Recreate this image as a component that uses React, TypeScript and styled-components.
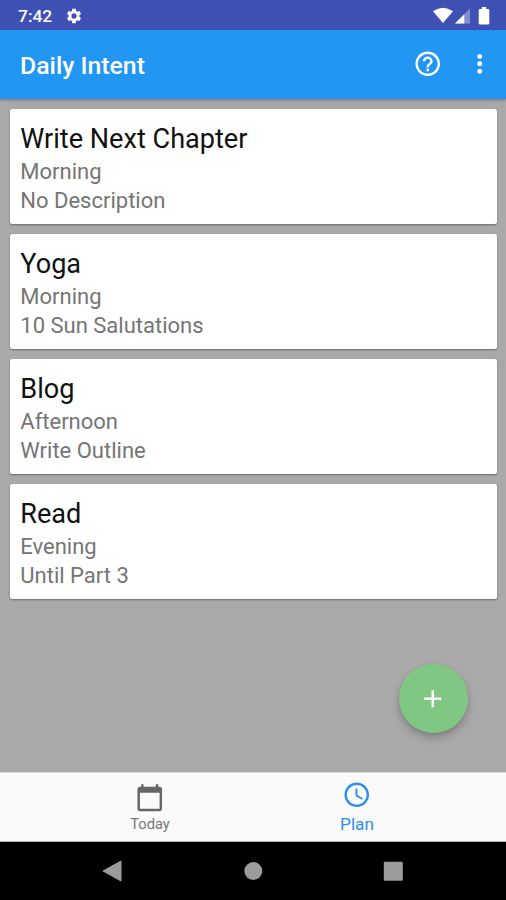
import React from "react";
import styled, { createGlobalStyle } from "styled-components";

const GlobalStyle = createGlobalStyle`
  * { box-sizing: border-box; }
  body { margin: 0; background: #a9a9a9; font-family: Roboto, "Liberation Sans", sans-serif; }
  svg { display: block; flex: none; }
`;

const Screen = styled.div`
  width: 506px;
  height: 900px;
  display: flex;
  flex-direction: column;
  background: #a9a9a9;
  overflow: hidden;
`;

const StatusBar = styled.header`
  height: 30px;
  flex: none;
  display: flex;
  align-items: center;
  padding: 1px 15px 0 18px;
  background: #3f51b5;
  color: #fff;
`;

const Clock = styled.span`
  font-size: 17.4px;
  font-weight: 500;
  line-height: 20px;
  width: 47px;
`;

const StatusIcons = styled.div`
  margin-left: auto;
  display: flex;
  gap: 2px;
`;

const AppBar = styled.div`
  height: 69px;
  flex: none;
  display: flex;
  align-items: center;
  padding: 0 12px 1px 20px;
  background: #2196f3;
  color: #fff;
  box-shadow: 0 1px 3px rgba(0, 0, 0, 0.3);
  z-index: 1;
`;

const AppTitle = styled.h1`
  margin: 3px auto 0 0;
  font-size: 24.8px;
  font-weight: 500;
  line-height: 30px;
`;

const IconButton = styled.button`
  border: 0;
  padding: 0;
  background: none;
  color: inherit;
  display: flex;
  & + & { margin-left: 22px; }
`;

const Content = styled.main`
  position: relative;
  flex: 1;
  display: flex;
  flex-direction: column;
  gap: 10px;
  padding: 10px 9px 0 10px;
`;

const Card = styled.article`
  height: 115.1px;
  padding: 14px 11px 0 10.3px;
  border-radius: 2.5px;
  background: #fff;
  box-shadow: 0 1px 2px rgba(0, 0, 0, 0.38);
`;

const CardTitle = styled.h2`
  margin: 0;
  font-size: 27.1px;
  font-weight: 400;
  line-height: 33px;
  color: #111;
`;

const CardLine = styled.p`
  margin: 0;
  font-size: 22px;
  line-height: 29.5px;
  color: #757575;
  ${CardTitle} + & { margin-top: 0.6px; }
`;

const AddButton = styled.button`
  position: absolute;
  right: 38.5px;
  bottom: 39px;
  width: 69px;
  height: 69px;
  border: 0;
  border-radius: 50%;
  padding: 0;
  display: flex;
  align-items: center;
  justify-content: center;
  background: #81c784;
  color: #fff;
  box-shadow: 0 5px 9px rgba(0, 0, 0, 0.22), 0 1px 4px rgba(0, 0, 0, 0.06);
`;

const Tabs = styled.nav`
  height: 70px;
  flex: none;
  display: flex;
  justify-content: center;
  padding-left: 1px;
  background: #fafafa;
  border-top: 1px solid #d8d8d8;
  border-bottom: 1px solid #b5b5b5;
`;

const Tab = styled.a<{ $active?: boolean }>`
  width: 207px;
  display: flex;
  flex-direction: column;
  align-items: center;
  padding-top: ${(p) => (p.$active ? 7 : 9.6)}px;
  color: ${(p) => (p.$active ? "#2f8fe8" : "#666")};
`;

const TabLabel = styled.span<{ $active?: boolean }>`
  font-size: ${(p) => (p.$active ? 17.2 : 14.7)}px;
  line-height: 20px;
  margin-top: ${(p) => (p.$active ? 4 : 2.4)}px;
  color: ${(p) => (p.$active ? "#2f8fe8" : "#777")};
`;

const SystemNav = styled.footer`
  height: 58px;
  flex: none;
  display: flex;
  align-items: center;
  justify-content: center;
  background: #000;
  color: #9c9c9c;
`;

const NavKey = styled.div`
  width: 140px;
  display: flex;
  justify-content: center;
`;

const Icon = ({ d, size = 29.5 }: { d: string; size?: number }) => (
  <svg width={size} height={size} viewBox="0 0 24 24" fill="currentColor">
    <path d={d} />
  </svg>
);

const paths = {
  settings:
    "M19.14 12.94c.04-.3.06-.61.06-.94 0-.32-.02-.64-.07-.94l2.03-1.58c.18-.14.23-.41.12-.61l-1.92-3.32c-.12-.22-.37-.29-.59-.22l-2.39.96c-.5-.38-1.03-.7-1.62-.94l-.36-2.54c-.04-.24-.24-.41-.48-.41h-3.84c-.24 0-.43.17-.47.41l-.36 2.54c-.59.24-1.13.57-1.62.94l-2.39-.96c-.22-.08-.47 0-.59.22L2.74 8.87c-.12.21-.08.47.12.61l2.03 1.58c-.05.3-.09.63-.09.94s.02.64.07.94l-2.03 1.58c-.18.14-.23.41-.12.61l1.92 3.32c.12.22.37.29.59.22l2.39-.96c.5.38 1.03.7 1.62.94l.36 2.54c.05.24.24.41.48.41h3.84c.24 0 .44-.17.47-.41l.36-2.54c.59-.24 1.13-.56 1.62-.94l2.39.96c.22.08.47 0 .59-.22l1.92-3.32c.12-.22.07-.47-.12-.61l-2.01-1.58zM12 15.6c-1.98 0-3.6-1.62-3.6-3.6s1.62-3.6 3.6-3.6 3.6 1.62 3.6 3.6-1.62 3.6-3.6 3.6z",
  help: "M11 18h2v-2h-2v2zm1-16C6.48 2 2 6.48 2 12s4.48 10 10 10 10-4.48 10-10S17.52 2 12 2zm0 18c-4.41 0-8-3.59-8-8s3.59-8 8-8 8 3.59 8 8-3.59 8-8 8zm0-14c-2.21 0-4 1.79-4 4h2c0-1.1.9-2 2-2s2 .9 2 2c0 2-3 1.75-3 5h2c0-2.25 3-2.5 3-5 0-2.21-1.79-4-4-4z",
  more: "M12 8c1.1 0 2-.9 2-2s-.9-2-2-2-2 .9-2 2 .9 2 2 2zm0 2c-1.1 0-2 .9-2 2s.9 2 2 2 2-.9 2-2-.9-2-2-2zm0 6c-1.1 0-2 .9-2 2s.9 2 2 2 2-.9 2-2-.9-2-2-2z",
  add: "M19 13h-6v6h-2v-6H5v-2h6V5h2v6h6v2z",
  today:
    "M20 3h-1V1h-2v2H7V1H5v2H4c-1.1 0-2 .9-2 2v16c0 1.1.9 2 2 2h16c1.1 0 2-.9 2-2V5c0-1.1-.9-2-2-2zm0 18H4V8h16v13z",
  clock:
    "M11.99 2C6.47 2 2 6.48 2 12s4.47 10 9.99 10C17.52 22 22 17.52 22 12S17.52 2 11.99 2zM12 20c-4.42 0-8-3.58-8-8s3.58-8 8-8 8 3.58 8 8-3.58 8-8 8zm.5-13H11v6l5.25 3.15.75-1.23-4.5-2.67z",
};

const intents = [
  { title: "Write Next Chapter", time: "Morning", note: "No Description" },
  { title: "Yoga", time: "Morning", note: "10 Sun Salutations" },
  { title: "Blog", time: "Afternoon", note: "Write Outline" },
  { title: "Read", time: "Evening", note: "Until Part 3" },
];

export default function App() {
  return (
    <>
      <GlobalStyle />
      <Screen>
        <StatusBar>
          <Clock>7:42</Clock>
          <Icon d={paths.settings} size={18} />
          <StatusIcons>
            <svg width="20" height="18" viewBox="0 0 20 18" fill="currentColor">
              <path d="M0 4.300Q10-2.900 20 4.300L10 16Z" />
            </svg>
            <svg width="16" height="18" viewBox="0 0 16 18" fill="currentColor">
              <path d="M15 1.500V16.500H0Z" opacity=".35" />
              <path d="M9.300 7.200V16.500H0Z" />
            </svg>
            <svg width="18" height="18" viewBox="2 0 18 18" fill="currentColor">
              <path d="M10.800 0h4.400v2H17q1.300 0 1.300 1.300v12.900q0 1.300-1.300 1.300H9q-1.300 0-1.300-1.300V3.300Q7.700 2 9 2h1.800z" />
            </svg>
          </StatusIcons>
        </StatusBar>
        <AppBar>
          <AppTitle>Daily Intent</AppTitle>
          <IconButton aria-label="Help">
            <Icon d={paths.help} />
          </IconButton>
          <IconButton aria-label="More options">
            <Icon d={paths.more} />
          </IconButton>
        </AppBar>
        <Content>
          {intents.map((item) => (
            <Card key={item.title}>
              <CardTitle>{item.title}</CardTitle>
              <CardLine>{item.time}</CardLine>
              <CardLine>{item.note}</CardLine>
            </Card>
          ))}
          <AddButton aria-label="Add intent">
            <Icon d={paths.add} />
          </AddButton>
        </Content>
        <Tabs>
          <Tab>
            <Icon d={paths.today} />
            <TabLabel>Today</TabLabel>
          </Tab>
          <Tab $active>
            <Icon d={paths.clock} />
            <TabLabel $active>Plan</TabLabel>
          </Tab>
        </Tabs>
        <SystemNav>
          <NavKey>
            <svg width="20" height="22" viewBox="0 0 20 22" fill="currentColor">
              <path d="M0 11 18 1V21Z" stroke="currentColor" strokeLinejoin="round" />
            </svg>
          </NavKey>
          <NavKey>
            <svg width="20" height="20" viewBox="0 0 20 20" fill="currentColor">
              <circle cx="10.300" cy="10" r="9" />
            </svg>
          </NavKey>
          <NavKey>
            <svg width="20" height="20" viewBox="0 0 20 20" fill="currentColor">
              <rect x=".8" y=".8" width="19" height="19" rx="1.200" />
            </svg>
          </NavKey>
        </SystemNav>
      </Screen>
    </>
  );
}
